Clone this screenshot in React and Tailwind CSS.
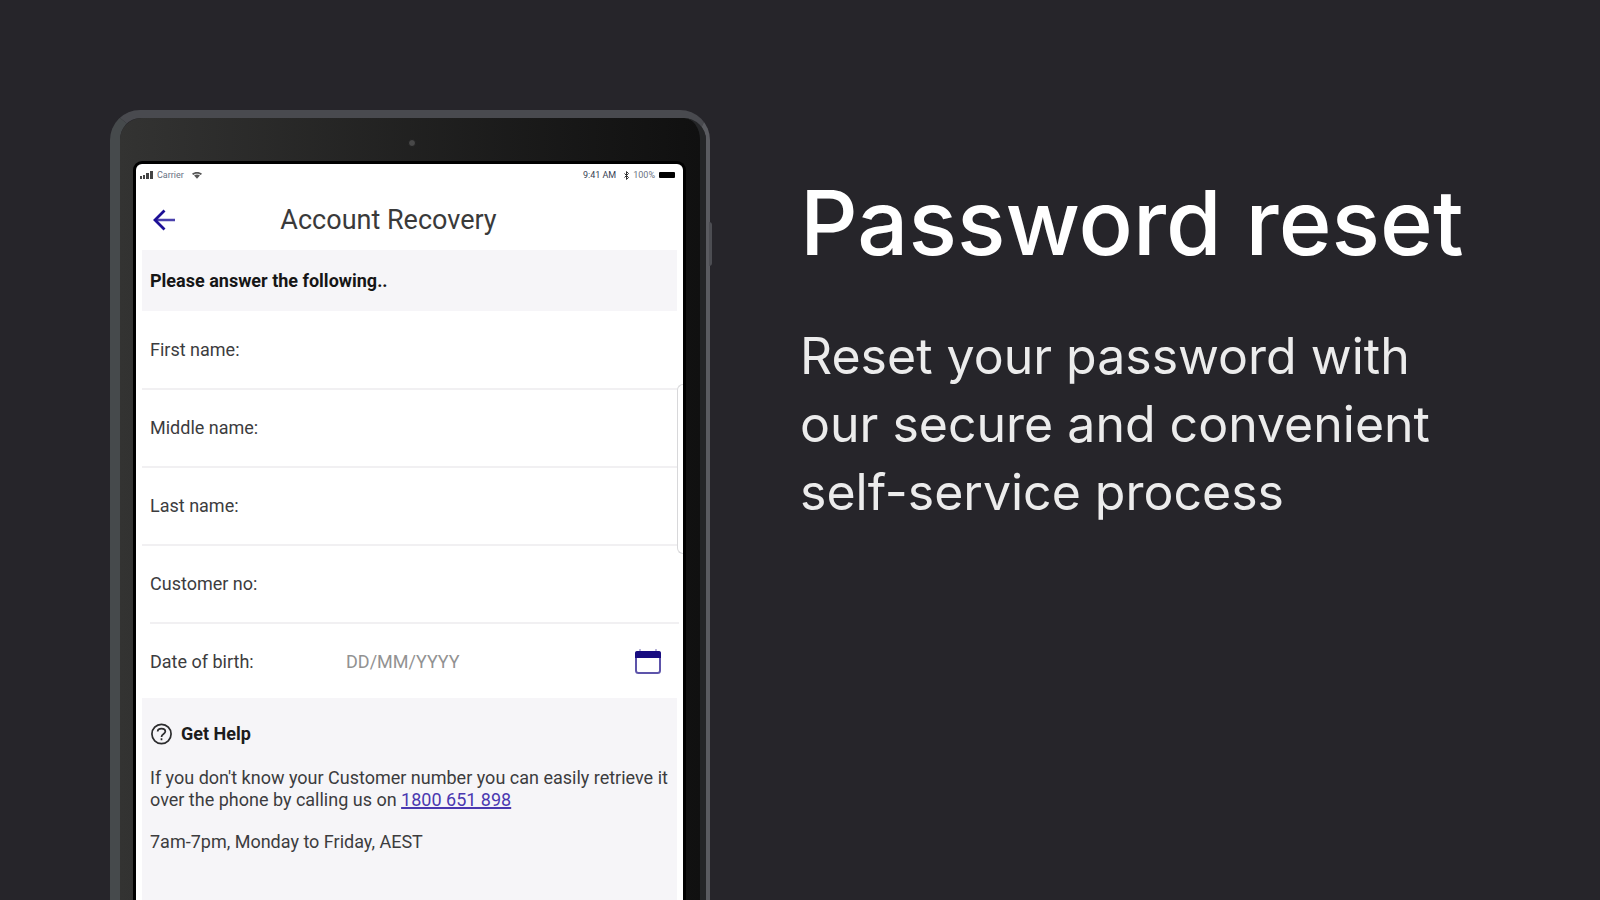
import { clsx } from "clsx";

const nameFields = [
  { id: "first-name", label: "First name:" },
  { id: "middle-name", label: "Middle name:" },
  { id: "last-name", label: "Last name:" },
  { id: "customer-no", label: "Customer no:" },
];

function StatusBar() {
  return (
    <div className="flex h-5 items-center justify-between px-1 pr-2 pt-0.5 text-[9px] leading-4 text-gray-500">
      <div className="flex items-center gap-1">
        <svg width="13" height="8" viewBox="0 0 13 8" fill="#444" aria-hidden="true">
          <rect x="0" y="5" width="2" height="3" />
          <rect x="3" y="4" width="2" height="4" />
          <rect x="6" y="2" width="3" height="6" />
          <rect x="10" y="0" width="3" height="8" />
        </svg>
        <span>Carrier</span>
        <svg width="10" height="8" viewBox="0 0 12 9" fill="#555" className="ml-1" aria-hidden="true">
          <path d="M0 3C3 0 9 0 12 3L10.500 4.500C8 2.300 4 2.300 1.500 4.500Z" />
          <path d="M2.500 5.200C4.500 3.500 7.500 3.500 9.500 5.200L6 9Z" />
        </svg>
      </div>
      <div className="flex items-center gap-1 text-gray-700">
        <span className="mr-1">9:41 AM</span>
        <svg width="5" height="9" viewBox="0 0 5 9" fill="none" stroke="#333" aria-hidden="true">
          <path d="M0.500 2.500L4.500 6.500L2.500 8.500V0.500L4.500 2.500L0.500 6.500" />
        </svg>
        <span className="text-gray-500">100%</span>
        <span className="h-[6px] w-4 rounded-[1px] bg-black" />
      </div>
    </div>
  );
}

function Header() {
  return (
    <header className="grid h-[66px] grid-cols-[24px_1fr_82px] items-center pt-1.5 pl-4">
      <button type="button" aria-label="Back" className="h-6 w-6">
        <svg width="24" height="24" viewBox="0 0 24 24" fill="none" aria-hidden="true">
          <path d="M3 12H23" stroke="#4a40ac" strokeWidth="2.500" />
          <path d="M12.500 2.500L3 12L12.500 21.500" stroke="#1c0f96" strokeWidth="2.800" />
        </svg>
      </button>
      <h2 className="text-center text-[27px] leading-8 text-[#3a3a3a]">Account Recovery</h2>
    </header>
  );
}

function NameField({ id, label, inset }) {
  return (
    <div
      className={clsx(
        "flex h-[78px] items-center border-b-2 border-[#f1f0f2]",
        inset ? "ml-[14px] mr-1" : "ml-[6px] mr-1 pl-2"
      )}
    >
      <label htmlFor={id} className="w-[195px] text-[18px] leading-[22px]">{label}</label>
      <input id={id} type="text" className="min-w-0 flex-1 bg-transparent text-[18px] leading-[22px] outline-none" />
    </div>
  );
}

function BirthField() {
  return (
    <div className="flex h-[74px] items-center pt-0.5 pl-[14px] pr-[21px]">
      <label htmlFor="dob" className="w-[196px] text-[18px] leading-[22px]">Date of birth:</label>
      <input
        id="dob"
        type="text"
        placeholder="DD/MM/YYYY"
        className="min-w-0 flex-1 bg-transparent text-[18px] leading-[22px] outline-none placeholder:text-[#929292]"
      />
      <button type="button" aria-label="Choose date">
        <svg width="28" height="26" viewBox="0 0 28 26" fill="none" aria-hidden="true">
          <rect x="2" y="3" width="24" height="21" rx="2.500" stroke="#5d54aa" strokeWidth="2" />
          <path d="M1 9V4a2 2 0 0 1 2-2H25a2 2 0 0 1 2 2V9Z" fill="#180c80" />
          <path d="M6 0V2M22 0V2" stroke="#b9b5da" strokeWidth="2" />
        </svg>
      </button>
    </div>
  );
}

function Help() {
  return (
    <section className="mx-[6px] flex-1 bg-[#f6f5f8] px-2 pt-6 pb-8 text-[18px] leading-[22px]">
      <h3 className="flex items-center gap-2 font-bold text-[#1c1c1c]">
        <svg width="23" height="24" viewBox="0 0 24 24" fill="none" stroke="#2c2c2e" strokeWidth="1.800" aria-hidden="true">
          <circle cx="12" cy="12" r="10" />
          <path d="M8 9.500C8 5.500 16 5.500 16 9.500C16 12 12 12 12 15M12 16.500V18.500" />
        </svg>
        Get Help
      </h3>
      <p className="mt-[21px] whitespace-nowrap">
        If you don't know your Customer number you can easily retrieve it
        <br />
        over the phone by calling us on{" "}
        <a href="tel:1800651898" className="text-[#4a38b0] underline decoration-2">1800 651 898</a>
      </p>
      <p className="mt-[20px]">7am-7pm, Monday to Friday, AEST</p>
    </section>
  );
}

function Tablet() {
  return (
    <div className="relative flex w-[600px] shrink-0 rounded-t-[30px] border-t-8 border-r-4 border-l-[10px] border-t-[#494a4f] border-r-[#5a5b60] border-l-[#464a4c]">
      <span className="absolute top-[104px] -right-[6px] h-[44px] w-[3px] rounded-r bg-[#4c4d52]" />
      <div className="relative flex flex-1 rounded-t-[22px] border-r-[6px] border-[#242527] bg-linear-to-r from-[#333332] to-[#101010] pt-[43px] pr-[14px] pl-[13px]">
        <span className="absolute top-[21px] left-[288px] h-2 w-2 rounded-full border border-[#202020] bg-[#484848]" />
        <div className="relative flex min-w-0 flex-1 flex-col rounded-t-[9px] border-x-[3px] border-t-[3px] border-black bg-black">
          <div className="relative flex flex-1 flex-col overflow-hidden rounded-t-md bg-white font-['Roboto',sans-serif] text-[#3c3c3e]">
            <StatusBar />
            <Header />
            <p className="mx-[6px] flex h-[61px] items-center bg-[#f6f5f8] px-2 text-[18px] leading-[22px] font-bold text-[#161616]">
              Please answer the following..
            </p>
            <form className="flex flex-1 flex-col pt-px">
              {nameFields.map((field, i) => (
                <NameField key={field.id} {...field} inset={i === nameFields.length - 1} />
              ))}
              <BirthField />
              <Help />
            </form>
            <span className="absolute top-[220px] right-0 h-[170px] w-[6px] rounded-l-md border border-r-0 border-[#d8d8da] bg-white" />
          </div>
        </div>
      </div>
    </div>
  );
}

export default function App() {
  return (
    <main className="flex min-h-screen gap-[90px] overflow-hidden bg-[#26252a] pt-[110px] pl-[110px]">
      <Tablet />
      <section className="min-w-0 flex-1 pt-[58px] font-['Inter',sans-serif] text-white">
        <h1 className="text-[90px] leading-[110px] font-medium whitespace-nowrap">Password reset</h1>
        <p className="mt-[44px] text-[50px] leading-[68px] text-[#ececec]">
          Reset your password with
          <br />
          our secure and convenient
          <br />
          self-service process
        </p>
      </section>
    </main>
  );
}
